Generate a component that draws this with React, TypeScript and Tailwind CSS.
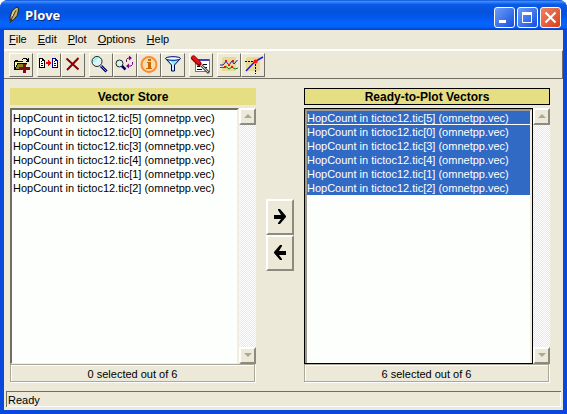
import React from "react";

const vectors = [5, 0, 3, 4, 1, 2].map((n) => `HopCount in tictoc12.tic[${n}] (omnetpp.vec)`);

function MenuItem({ label }: { label: string }) {
  return (
    <button className="px-[5px]">
      <span className="underline underline-offset-1">{label[0]}</span>
      {label.slice(1)}
    </button>
  );
}

function ToolButton({ label, children }: { label: string; children: React.ReactNode }) {
  return (
    <button
      aria-label={label}
      className="h-6 w-6 shrink-0 border border-t-white border-l-white border-r-[#716f64] border-b-[#716f64] bg-[#ece9d8]"
    >
      <svg viewBox="0 0 22 22" className="block h-full w-full" fill="none" shapeRendering="crispEdges">
        {children}
      </svg>
    </button>
  );
}

function OpenIcon() {
  return (
    <>
      <path d="M4 7h1V6h3v1h5v3H8l-3 5H4z" fill="#fbf8a0" />
      <path d="M4 7h1V6h3v1h5v1H5v7H4z" fill="#000" />
      <path d="M8 10h9l-3 5H5z" fill="#8b8418" />
      <path d="M7 9h10v1H8v1H7v2H6v2h8v1H4v-1h1v-2h1v-2h1z" fill="#000" />
      <path d="M12 5h1V4h4v1h1V4h1v4h-3V7h1V6h-1V5h-3v1h-1z" fill="#000" />
      <path d="M13 10h3v3h4v3h-4v3h-3v-3H9v-3h4z" fill="#7c0d12" />
    </>
  );
}

function CopyIcon() {
  return (
    <>
      <path d="M1 4h4v1h1v1h1v8H1z" fill="#000" />
      <path d="M2 5h2v2h2v6H2z" fill="#fff" />
      <path d="M3 7h1v1H3zM3 9h2v1H3zM3 11h2v1H3z" fill="#000" />
      <path d="M14 4h4v1h1v1h1v8h-6z" fill="#00008b" />
      <path d="M15 5h2v2h2v6h-4z" fill="#fff" />
      <path d="M16 7h1v1h-1zM16 9h2v1h-2zM16 11h2v1h-2z" fill="#00008b" />
      <path d="M8 8h2V6h1v1h1v1h1v2h-1v1h-1v1h-1v-2H8z" fill="#f00" />
    </>
  );
}

function DeleteIcon() {
  return <path d="M4.500 4.500l12 11M16.500 4L5 16" stroke="#8b0000" strokeWidth="2" shapeRendering="auto" />;
}

function FindIcon() {
  return (
    <g shapeRendering="auto">
      <circle cx="7" cy="7.500" r="5" fill="#dcf4f4" stroke="#222" />
      <path d="M4 8q0-3.500 3.500-3.500" stroke="#6ff" strokeWidth="1.500" />
      <path d="M11 12l5.500 5.500" stroke="#000070" strokeWidth="3" />
      <path d="M11 12l5 5" stroke="#8888d0" />
    </g>
  );
}

function FindNextIcon() {
  return (
    <g shapeRendering="auto">
      <circle cx="5.500" cy="9.500" r="3.500" fill="#d5f5f5" stroke="#222" />
      <path d="M8 12l3.500 3.500" stroke="#000070" strokeWidth="2.500" />
      <path d="M12.500 8V5.500L14 4h2M18.500 8v2.500L17 12h-3" stroke="#80008b" />
      <path d="M15 1.500L18 4l-3 2.500zM15 9.500L12 12l3 2.500z" fill="#80008b" />
    </g>
  );
}

function InfoIcon() {
  return (
    <g shapeRendering="auto">
      <circle cx="11" cy="10.500" r="7.500" fill="#f5dfae" stroke="#ff8a30" strokeWidth="2" />
      <path d="M10 5h3v2h-3zM9 8h4v6h1v1H8v-1h2V9H9z" fill="#c66a08" />
    </g>
  );
}

function FilterIcon() {
  return (
    <g shapeRendering="auto">
      <path d="M4 5l5.500 6v6h3v-6L18 5z" fill="#7feeee" stroke="#000060" />
      <ellipse cx="11" cy="4.500" rx="7.500" ry="1.800" fill="#e8ffff" stroke="#000080" />
      <path d="M8 7l3 4v5" stroke="#fff" />
    </g>
  );
}

function PropertiesIcon() {
  return (
    <>
      <path d="M5 5h14v12H5z" fill="#fff" stroke="#777" />
      <path d="M5 5h14v2H5z" fill="#4040c0" />
      <path d="M13 10h4v1h-4zM7 12h3v1H7zM15 13h2v1h-2zM7 15h5v1H7z" fill="#000" />
      <g shapeRendering="auto">
        <path d="M3.500 4l5.500 5.500" stroke="#900" strokeWidth="5" strokeLinecap="round" />
        <path d="M3.500 3.500l5 5" stroke="#e01515" strokeWidth="3" strokeLinecap="round" />
        <path d="M11 11l8 8" stroke="#555" strokeWidth="3" />
        <path d="M11 11l7 7" stroke="#ccc" />
      </g>
    </>
  );
}

function PlotIcon() {
  return (
    <>
      <rect x="4" y="3" width="14" height="14" rx="2" fill="#e8d994" />
      <g shapeRendering="auto">
        <path d="M2 11h3l3-3.500 3 3.500 3-4 2 3 3.500-4" stroke="#1818e0" />
        <path d="M2 13.500h4l2-1 3 2.500 3-2 3 2 3-1" stroke="#168016" />
      </g>
      <path d="M7 6h2v2H7zM10 10h2v2h-2zM14 6h2v2h-2zM6 12h2v2H6zM13 12h2v2h-2z" fill="#f01010" />
    </>
  );
}

function TangentIcon() {
  return (
    <>
      <rect x="4" y="3" width="14" height="14" rx="2" fill="#e8d994" />
      <path d="M3 7.500h9M13.500 10v10" stroke="#000" strokeDasharray="2 1" />
      <path d="M4 17l9-9.500L21 3" stroke="#1616ef" strokeWidth="1.500" shapeRendering="auto" />
      <circle cx="13.500" cy="7.500" r="2" fill="#ff1010" shapeRendering="auto" />
    </>
  );
}

function Feather() {
  return (
    <svg viewBox="0 0 16 18" className="h-[18px] w-4" aria-hidden="true">
      <path d="M10 1.500L12 1l.5 3-1 5-4 5-3 1-.5-4 2-6z" fill="#c4ad70" stroke="#20261c" />
      <path d="M10 4L6 12l-2 5" stroke="#372f16" fill="none" />
      <path d="M10.500 2.500L7.500 6 6 10" stroke="#f4dfa0" fill="none" />
    </svg>
  );
}

function WindowButton({ label, close, children }: { label: string; close?: boolean; children: React.ReactNode }) {
  const tint = close ? "from-[#ef8262] to-[#d83d14]" : "from-[#6d9df5] to-[#174be0]";
  return (
    <button aria-label={label} className={`h-[21px] w-[21px] rounded-[3px] border border-white bg-linear-to-br ${tint}`}>
      <svg viewBox="0 0 19 19" className="block h-full w-full" fill="none" stroke="#fff">
        {children}
      </svg>
    </button>
  );
}

function ScrollBar() {
  const end =
    "flex h-[17px] w-full items-center justify-center border-2 border-t-white border-l-white border-r-[#8d8b7d] border-b-[#8d8b7d] bg-[#ece9d8]";
  return (
    <div className="flex w-[17px] shrink-0 flex-col justify-between bg-[conic-gradient(#fff_25%,#ece9d8_25%_50%,#fff_50%_75%,#ece9d8_75%)] bg-size-[2px_2px]">
      <button aria-label="Scroll up" className={end}>
        <svg viewBox="0 0 8 5" className="h-[5px] w-2"><path d="M0 4l4-4 4 4z" fill="#aca899" /></svg>
      </button>
      <button aria-label="Scroll down" className={end}>
        <svg viewBox="0 0 8 5" className="h-[5px] w-2"><path d="M0 0l4 4 4-4z" fill="#aca899" /></svg>
      </button>
    </div>
  );
}

function VectorPanel({ id, title, active }: { id: string; title: string; active?: boolean }) {
  const header = active ? "border-black" : "border-[#e6de82]";
  const list = active
    ? "border border-black"
    : "border-l-2 border-t-2 border-t-[#716f64] border-l-[#716f64] border-r-2 border-r-[#f1ede0] border-b border-b-[#f1ede0]";
  return (
    <section className="flex min-w-0 flex-1 flex-col">
      <label htmlFor={id} className={`h-[17px] border bg-[#e6de82] text-center text-xs leading-4 font-bold ${header}`}>
        {title}
      </label>
      <div className="mt-[3px] flex flex-1">
        <div className={`flex min-w-0 flex-1 bg-[#fdfffc] ${list}`}>
          <select
            id={id}
            multiple
            size={18}
            defaultValue={active ? vectors : []}
            className={`min-h-[252px] w-full appearance-none overflow-hidden bg-transparent outline-none [scrollbar-width:none] ${active ? "border-t-2 border-l-2 border-r-2 border-t-[#9d9a90] border-l-[#9d9a90] border-r-[#f1ede0]" : "pt-px"}`}
          >
            {vectors.map((v, i) => (
              <option
                key={v}
                value={v}
                className={`h-3.5 min-h-3.5 p-0 pt-px text-[11px] leading-3 ${active ? "bg-linear-to-r from-[#316ac5] to-[#316ac5] [-webkit-text-fill-color:white]" : "pl-px [-webkit-text-fill-color:black]"} ${active && i === 0 ? "border-b border-white" : ""}`}
              >
                {v}
              </option>
            ))}
          </select>
        </div>
        <ScrollBar />
      </div>
      <output
        htmlFor={id}
        className="mr-px h-[18px] border border-[#aca899] text-center leading-[18px] shadow-[inset_1px_1px_#fff,1px_1px_#fff]"
      >
        {active ? 6 : 0} selected out of 6
      </output>
    </section>
  );
}

export default function App() {
  return (
    <div className="flex min-h-screen flex-col rounded-t-lg bg-[#0848dc] font-['Liberation_Sans',Arial,sans-serif] text-[11px] text-black">
      <header className="flex h-[30px] items-center gap-1.5 rounded-t-lg bg-[linear-gradient(#0a50d0_0,#3c8cff_5%,#0a5ae8_15%,#0452dc_40%,#0458ee_60%,#0466fe_80%,#0460f8_90%,#0340c8_100%)] px-1.5">
        <Feather />
        <h1 className="-ml-1 flex-1 pt-0.5 pl-px font-['Open_Sans','Noto_Sans',sans-serif] text-[13px] font-bold text-white [text-shadow:1px_1px_#0a2a80]">
          Plove
        </h1>
        <div className="flex gap-0.5 pt-1">
          <WindowButton label="Minimize"><path d="M4 13.500h7" strokeWidth="3" /></WindowButton>
          <WindowButton label="Maximize">
            <path d="M4.500 5v9.500h9V5" />
            <path d="M4 5.500h10" strokeWidth="3" />
          </WindowButton>
          <WindowButton label="Close" close><path d="M4.500 4.500l10 10M14.500 4.500l-10 10" strokeWidth="2" /></WindowButton>
        </div>
      </header>
      <div className="mx-1 mb-1 flex flex-1 flex-col bg-[#ece9d8]">
        <nav className="flex h-5 items-center gap-px border-b border-white">
          {["File", "Edit", "Plot", "Options", "Help"].map((m) => <MenuItem key={m} label={m} />)}
        </nav>
        <div role="toolbar" aria-label="Main" className="flex h-[29px] items-center gap-1 border-t border-r border-b border-t-white border-r-[#716f64] border-b-[#716f64] pl-[5px]">
          <ToolButton label="Open"><OpenIcon /></ToolButton>
          <div className="flex">
            <ToolButton label="Copy"><CopyIcon /></ToolButton>
            <ToolButton label="Delete"><DeleteIcon /></ToolButton>
          </div>
          <div className="flex">
            <ToolButton label="Find"><FindIcon /></ToolButton>
            <ToolButton label="Find next"><FindNextIcon /></ToolButton>
            <ToolButton label="Info"><InfoIcon /></ToolButton>
            <ToolButton label="Filter"><FilterIcon /></ToolButton>
          </div>
          <ToolButton label="Properties"><PropertiesIcon /></ToolButton>
          <div className="flex">
            <ToolButton label="Plot"><PlotIcon /></ToolButton>
            <ToolButton label="Tangent"><TangentIcon /></ToolButton>
          </div>
        </div>
        <main className="flex flex-1 gap-2.5 pt-[9px] pr-[13px] pb-[9px] pl-1.5">
          <VectorPanel id="store" title="Vector Store" />
          <div className="flex w-7 flex-col self-center">
            {[
              ["Add to plot", "M6 14h7l-3-5V8h2l6 7v1l-6 7h-2v-1l3-4H6z"],
              ["Remove from plot", "M18 14h-7l3-5V8h-2l-6 7v1l6 7h2v-1l-3-4h7z"],
            ].map(([label, d]) => (
              <button key={label} aria-label={label} className="h-9 border-2 border-t-white border-l-white border-r-[#8d8b7d] border-b-[#8d8b7d]">
                <svg viewBox="0 0 24 32" className="block h-8 w-6"><path d={d} /></svg>
              </button>
            ))}
          </div>
          <VectorPanel id="ready" title="Ready-to-Plot Vectors" active />
        </main>
        <footer className="mx-0.5 mb-[3px] h-4 border-t border-l border-[#716f64] pl-px leading-4 shadow-[inset_-1px_-1px_#fff]">Ready</footer>
      </div>
    </div>
  );
}
